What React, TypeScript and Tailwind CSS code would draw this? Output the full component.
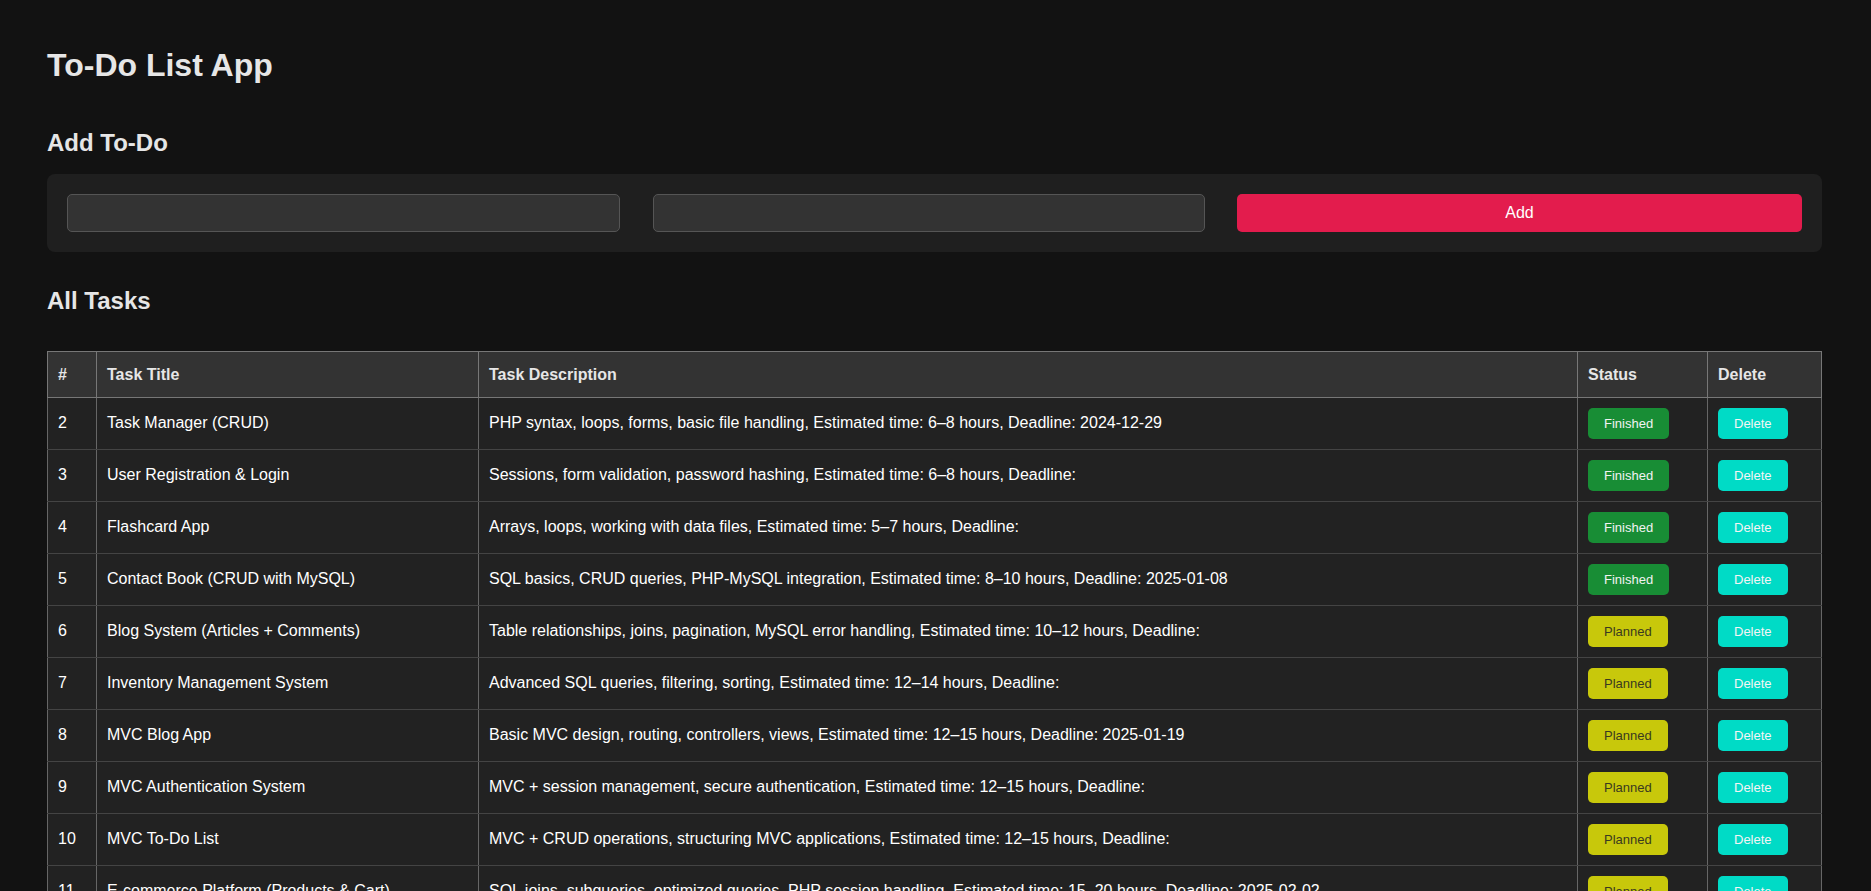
import React from "react";

type Task = { id: number; title: string; desc: string; status: "Finished" | "Planned" };

const tasks: Task[] = [
  { id: 2, title: "Task Manager (CRUD)", desc: "PHP syntax, loops, forms, basic file handling, Estimated time: 6–8 hours, Deadline: 2024-12-29", status: "Finished" },
  { id: 3, title: "User Registration & Login", desc: "Sessions, form validation, password hashing, Estimated time: 6–8 hours, Deadline:", status: "Finished" },
  { id: 4, title: "Flashcard App", desc: "Arrays, loops, working with data files, Estimated time: 5–7 hours, Deadline:", status: "Finished" },
  { id: 5, title: "Contact Book (CRUD with MySQL)", desc: "SQL basics, CRUD queries, PHP-MySQL integration, Estimated time: 8–10 hours, Deadline: 2025-01-08", status: "Finished" },
  { id: 6, title: "Blog System (Articles + Comments)", desc: "Table relationships, joins, pagination, MySQL error handling, Estimated time: 10–12 hours, Deadline:", status: "Planned" },
  { id: 7, title: "Inventory Management System", desc: "Advanced SQL queries, filtering, sorting, Estimated time: 12–14 hours, Deadline:", status: "Planned" },
  { id: 8, title: "MVC Blog App", desc: "Basic MVC design, routing, controllers, views, Estimated time: 12–15 hours, Deadline: 2025-01-19", status: "Planned" },
  { id: 9, title: "MVC Authentication System", desc: "MVC + session management, secure authentication, Estimated time: 12–15 hours, Deadline:", status: "Planned" },
  { id: 10, title: "MVC To-Do List", desc: "MVC + CRUD operations, structuring MVC applications, Estimated time: 12–15 hours, Deadline:", status: "Planned" },
  { id: 11, title: "E-commerce Platform (Products & Cart)", desc: "SQL joins, subqueries, optimized queries, PHP session handling, Estimated time: 15–20 hours, Deadline: 2025-02-02", status: "Planned" },
];

const th = "border border-[#777] bg-[#333] px-[10px] py-[13px] text-left font-bold leading-[19px] text-[#e6e6e6]";
const td = "border border-x-[#666] border-y-[#444] px-[10px] py-[10px] align-middle leading-[18px] text-white";

export default function App() {
  return (
    <div className="min-h-screen bg-[#121212] pl-[47px] pr-[49px] pt-[47px] pb-10 font-['Liberation_Sans',Arial,sans-serif] text-[16px]">
      <h1 className="text-[32px] font-bold leading-[1.15] text-[#e6e6e6]">To-Do List App</h1>
      <h2 className="mt-[45px] text-[24px] font-bold leading-[1.15] text-[#e6e6e6]">Add To-Do</h2>
      <div className="mt-[18px] rounded-lg bg-[#1f1f1f] p-5">
        <div className="grid grid-cols-[553px_552px_1fr] gap-x-[32.5px]">
          <input className="h-[38px] rounded-[5px] border border-[#555] bg-[#333] px-2 text-white outline-none" />
          <input className="h-[38px] rounded-[5px] border border-[#555] bg-[#333] px-2 text-white outline-none" />
          <button className="h-[38px] rounded-[5px] bg-[#e31c4d] text-[16px] text-white">Add</button>
        </div>
      </div>
      <h2 className="mt-[35px] text-[24px] font-bold leading-[1.15] text-[#e6e6e6]">All Tasks</h2>
      <table className="mt-[36px] w-full table-fixed border-collapse">
        <colgroup>
          <col className="w-[49px]" />
          <col className="w-[382px]" />
          <col />
          <col className="w-[130px]" />
          <col className="w-[114px]" />
        </colgroup>
        <thead>
          <tr>
            <th className={th}>#</th>
            <th className={th}>Task Title</th>
            <th className={th}>Task Description</th>
            <th className={th}>Status</th>
            <th className={th}>Delete</th>
          </tr>
        </thead>
        <tbody>
          {tasks.map((t) => (
            <tr key={t.id} className="bg-[#222]">
              <td className={td}>{t.id}</td>
              <td className={td}>{t.title}</td>
              <td className={td}>{t.desc}</td>
              <td className={td}>
                {t.status === "Finished" ? (
                  <span className="inline-block rounded-[5px] bg-[#188d35] px-4 py-2 text-[13px] leading-[15px] text-[#f2f2f2]">Finished</span>
                ) : (
                  <span className="inline-block rounded-[5px] bg-[#c8c80b] px-4 py-2 text-[13px] leading-[15px] text-[#3a3a20]">Planned</span>
                )}
              </td>
              <td className={td}>
                <button className="inline-block rounded-[5px] bg-[#00dbc6] px-4 py-2 text-[13px] leading-[15px] text-[#f5f5f5]">Delete</button>
              </td>
            </tr>
          ))}
        </tbody>
      </table>
    </div>
  );
}
